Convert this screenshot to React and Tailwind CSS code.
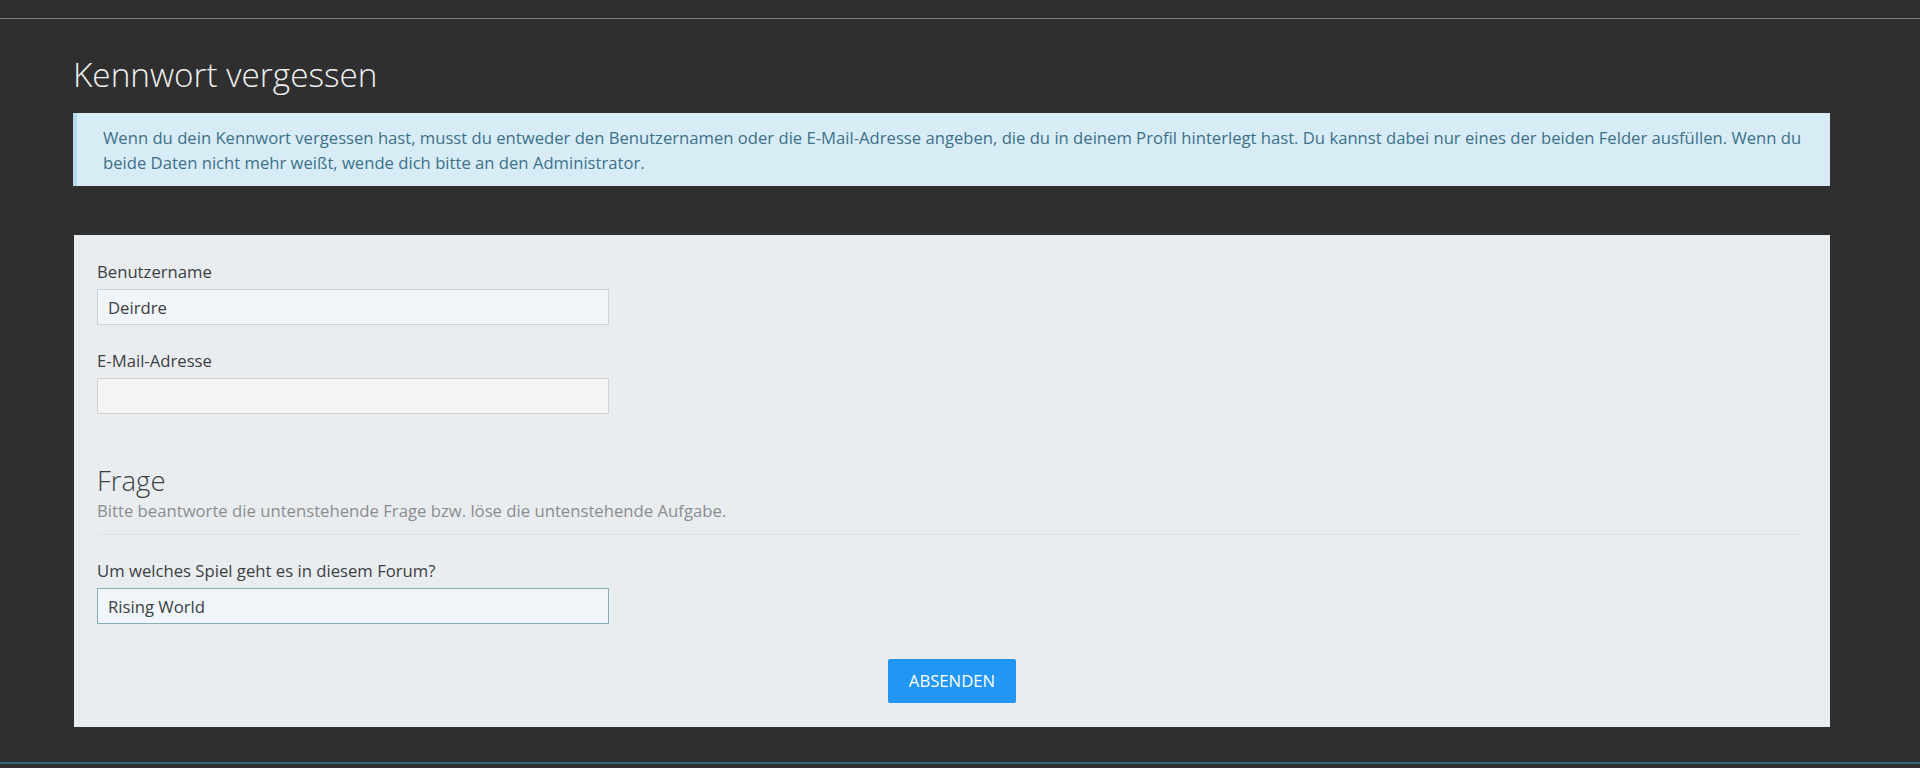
import React, { useState } from 'react';

const font = { fontFamily: '"Open Sans", "Noto Sans", Arial, sans-serif' };

const Field = ({ label, value, onChange, variant = 'default', caret = false }) => {
  const styles = {
    default: 'bg-[#eff5f9] border-[#c6d5e0]',
    empty: 'bg-[#f4f4f4] border-[#cfd2d4]',
    focus: 'bg-[#eff5f9] border-[#8aaeb7]',
  };
  return (
    <div className="flex flex-col">
      <label className="text-[16.7px] leading-[23px] text-[#3b3f42]">{label}</label>
      <input
        value={value}
        onChange={onChange}
        autoFocus={caret}
        className={`mt-[6px] h-[36px] w-[512px] border px-[10px] text-[16.7px] text-[#3b3f42] outline-none ${styles[variant]}`}
        style={font}
      />
    </div>
  );
};

export default function App() {
  const [username, setUsername] = useState('Deirdre');
  const [email, setEmail] = useState('');
  const [answer, setAnswer] = useState('Rising World');

  return (
    <div className="min-h-[768px] w-full bg-[#2f2f2f] text-[#3b3f42]" style={font}>
      {/* top nav (cut off) */}
      <div className="h-[19px] overflow-hidden border-b border-[#7b7b7b]" />

      <div className="ml-[73px] w-[1757px]">
        <h1 className="mt-[36px] text-[33.3px] font-light leading-[38px] text-[#efefef]">
          Kennwort vergessen
        </h1>

        {/* info box */}
        <div className="mt-[20px] border-l-[4px] border-[#b3dbef] bg-[#d8ecf6] pb-[11px] pl-[26px] pr-[16px] pt-[12px] text-[16.65px] leading-[25px] text-[#3c7189]">
          Wenn du dein Kennwort vergessen hast, musst du entweder den Benutzernamen oder die E-Mail-Adresse
          angeben, die du in deinem Profil hinterlegt hast. Du kannst dabei nur eines der beiden Felder
          ausfüllen. Wenn du beide Daten nicht mehr weißt, wende dich bitte an den Administrator.
        </div>

        {/* form panel */}
        <form
          className="mt-[49px] ml-px bg-[#e9edf0] pb-[24px] pl-[23px] pr-[30px] pt-[25px]"
          onSubmit={(e) => e.preventDefault()}
        >
          <Field label="Benutzername" value={username} onChange={(e) => setUsername(e.target.value)} />
          <div className="mt-[24px]">
            <Field
              label="E-Mail-Adresse"
              value={email}
              variant="empty"
              onChange={(e) => setEmail(e.target.value)}
            />
          </div>

          <div className="mt-[48px]">
            <h2 className="text-[27.5px] font-light leading-[37px] text-[#3b3f42]">Frage</h2>
            <p className="text-[16.7px] leading-[23px] text-[#8a8d90]">
              Bitte beantworte die untenstehende Frage bzw. löse die untenstehende Aufgabe.
            </p>
            <div className="mt-[12px] border-t border-[#dde2e6]" />
          </div>

          <div className="mt-[24px]">
            <Field
              label="Um welches Spiel geht es in diesem Forum?"
              value={answer}
              variant="focus"
              caret
              onChange={(e) => setAnswer(e.target.value)}
            />
          </div>

          <div className="mt-[35px] flex justify-center pl-[7px]">
            <button
              type="submit"
              className="h-[44px] w-[128px] rounded-[2px] bg-[#2196f3] text-[16.7px] uppercase text-white"
              style={font}
            >
              Absenden
            </button>
          </div>
        </form>
      </div>

      <div className="mt-[35px] h-[2px] bg-[#2e6e7f]" />
    </div>
  );
}
